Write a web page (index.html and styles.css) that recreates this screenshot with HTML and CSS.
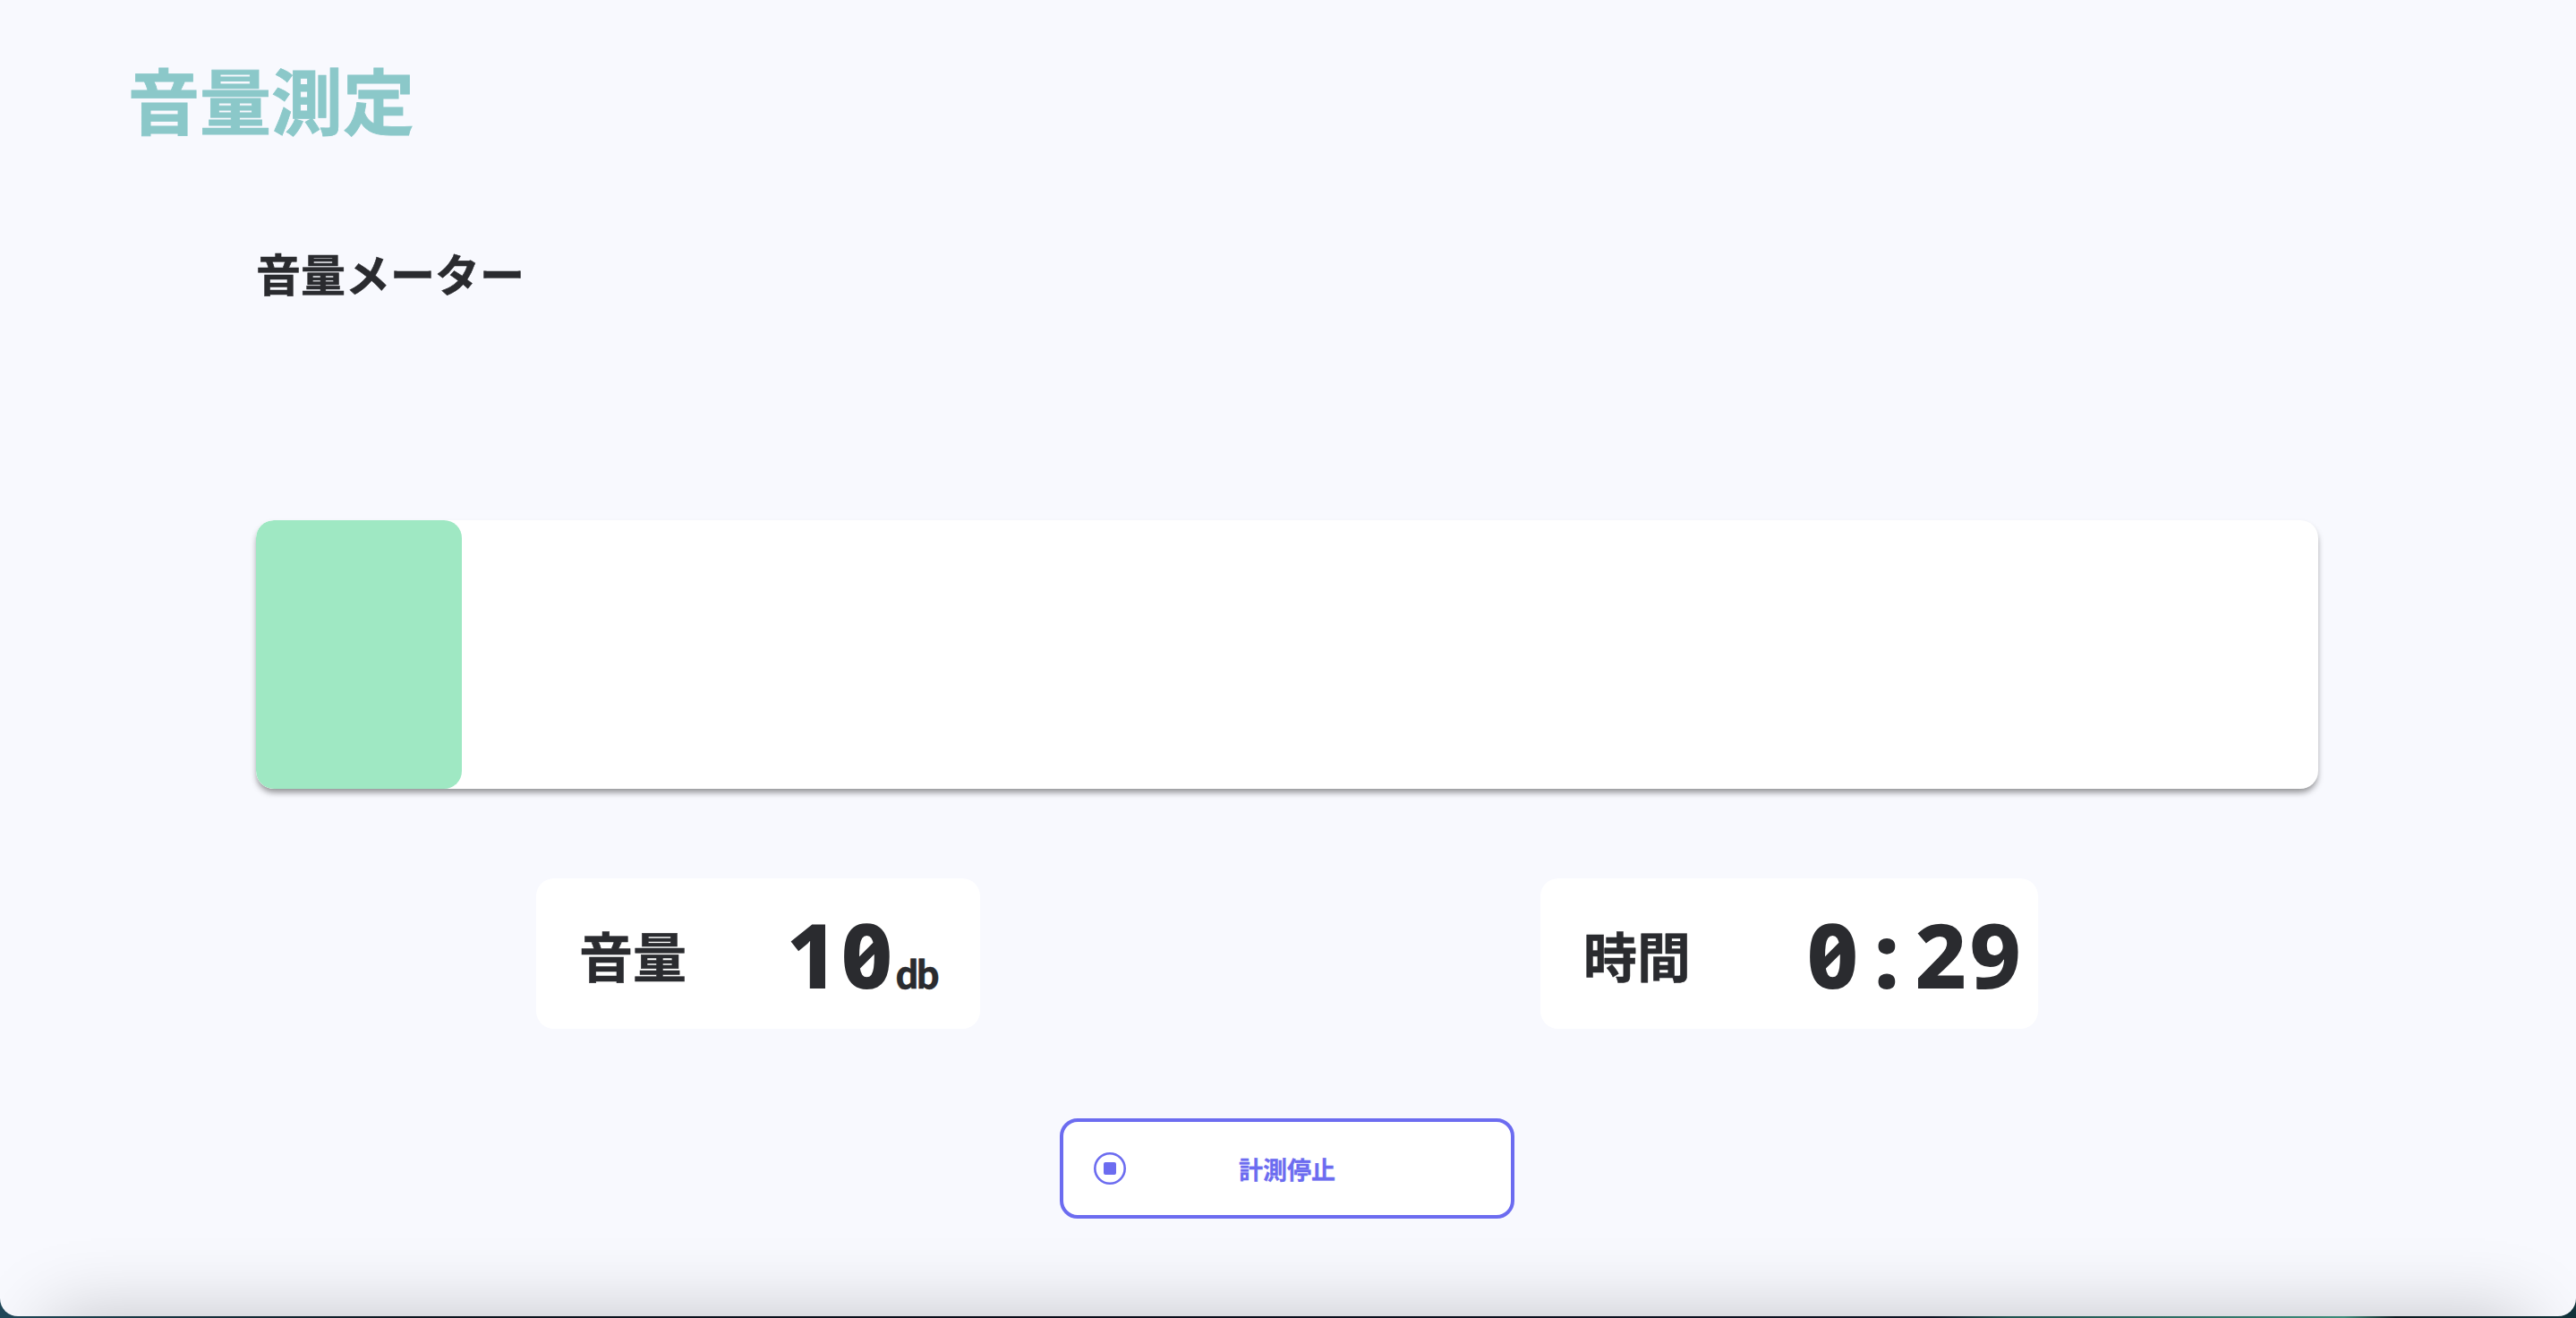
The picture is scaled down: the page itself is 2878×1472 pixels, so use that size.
FILE: index.html
```html
<!DOCTYPE html>
<html lang="ja">
<head>
<meta charset="utf-8">
<title>音量測定</title>
<link rel="stylesheet" href="styles.css">
</head>
<body>
<main class="window">
  <h1 class="title">音量測定</h1>
  <section class="content">
    <h2 class="subtitle">音量メーター</h2>
    <div class="meter"><div class="meter-fill" style="width: 10%"></div></div>
    <div class="stats">
      <div class="stat stat-volume">
        <span class="stat-label">音量</span>
        <span class="stat-value">10<span class="stat-unit">db</span></span>
      </div>
      <div class="stat stat-time">
        <span class="stat-label">時間</span>
        <span class="stat-value">0<span class="stat-colon">:</span>29</span>
      </div>
    </div>
    <button class="stop-button" type="button">
      <svg class="stop-icon" viewBox="0 0 36 36" aria-hidden="true">
        <circle cx="18" cy="18" r="16.7" fill="none" stroke="currentColor" stroke-width="2.6"/>
        <rect x="11" y="11" width="14" height="14" rx="2" fill="currentColor"/>
      </svg>
      <span class="stop-label">計測停止</span>
    </button>
  </section>
  <div class="bottom-shade"></div>
</main>
</body>
</html>
```
FILE: styles.css
```css
* { box-sizing: border-box; }
html, body { margin: 0; height: 100%; }
body {
  overflow: hidden;
  background: linear-gradient(90deg, #1f4658 0%, #1c3f4c 3%, #0d1620 16%, #0a0d1a 40%, #0e1424 75%, #20504e 78%, #3e8c7a 91%, #0a1a20 93%, #10323a 100%);
  font-family: "Noto Sans CJK JP", "Noto Sans", sans-serif;
}
.window {
  position: relative;
  height: 1470px;
  overflow: hidden;
  background: #f8f9fe;
  border-radius: 0 0 20px 20px;
  padding: 57px 0 0 143px;
}
.title {
  margin: 0;
  font-size: 80px;
  line-height: 104px;
  font-weight: 700;
  color: #8bc8c9;
  -webkit-text-stroke: 0.8px #8bc8c9;
}
.content {
  width: 2304px;
  margin: 108px 0 0 143px;
}
.subtitle {
  margin: 0;
  font-size: 50px;
  line-height: 70px;
  font-weight: 700;
  color: #2a2b2f;
  -webkit-text-stroke: 0.5px #2a2b2f;
}
.meter {
  height: 300px;
  margin-top: 242px;
  border-radius: 20px;
  background: #fff;
  box-shadow: 0 5px 7px -1px rgba(0, 0, 0, 0.42);
  overflow: hidden;
}
.meter-fill {
  height: 100%;
  background: #9fe8c3;
  border-radius: 20px;
}
.stats {
  display: flex;
  justify-content: space-around;
  margin-top: 100px;
}
.stat {
  display: flex;
  align-items: center;
  justify-content: space-between;
  height: 168px;
  padding: 0 48px;
  background: #fff;
  border-radius: 20px;
  color: #2a2b2f;
}
.stat-volume { width: 496px; }
.stat-time { width: 556px; padding-right: 16px; }
.stat-label {
  font-size: 60px;
  font-weight: 700;
  -webkit-text-stroke: 0.5px #2a2b2f;
}
.stat-value {
  display: inline-flex;
  align-items: baseline;
  font-family: "Noto Sans", sans-serif;
  font-feature-settings: "zero", "tnum";
  font-size: 100px;
  line-height: 1;
  font-weight: 800;
  letter-spacing: 3px;
}
.stat-colon {
  width: 60px;
  text-align: center;
}
.stat-unit {
  font-family: "Noto Sans CJK JP", sans-serif;
  font-size: 41px;
  font-weight: 700;
  letter-spacing: -3px;
  -webkit-text-stroke: 0.5px #2a2b2f;
}
.stop-button {
  position: relative;
  display: flex;
  align-items: center;
  justify-content: center;
  width: 508px;
  height: 112px;
  margin: 100px auto 0;
  background: #fff;
  border: 4px solid #6c6cf0;
  border-radius: 20px;
  color: #6c6cf0;
  font: 700 27px "Noto Sans CJK JP", sans-serif;
  -webkit-text-stroke: 0.3px #6c6cf0;
}
.stop-icon {
  position: absolute;
  left: 34px;
  top: 34px;
  width: 36px;
  height: 36px;
}
.bottom-shade {
  position: absolute;
  left: 55px;
  right: 55px;
  bottom: -300px;
  height: 300px;
  box-shadow: 0 0 80px rgba(0, 0, 0, 0.22);
}
```
